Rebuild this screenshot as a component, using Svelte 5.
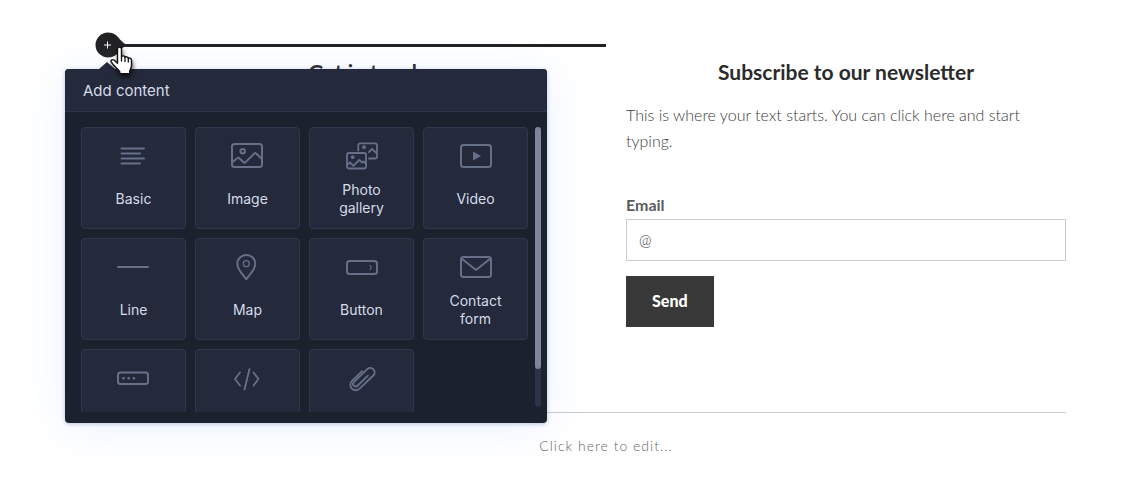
<script>
  const tiles = [
    { label: 'Basic', icon: '<path d="M5.500 7.500h22.500M5.500 12.500h18.500M5.500 17.500h22.500M5.500 22.500h18.500"/>' },
    { label: 'Image', icon: '<rect x="2" y="3" width="30" height="23" rx="2.500"/><circle cx="12.700" cy="10.200" r="2.200"/><path d="M2 21.500l5.500-4.500q.7-.5 1.400 0l5 4.500q.7.500 1.400-.1l9.200-9q.8-.8 1.600 0L32 18"/>' },
    { label: 'Photo gallery', icon: '<g stroke-width="1.800"><rect x="3" y="12" width="19" height="15.500" rx="2"/><path d="M14.300 9.500V4.300a2 2 0 0 1 2-2H31a2 2 0 0 1 2 2V15.500a2 2 0 0 1-2 2h-6M3.500 23.500L6 21.500l3.500 3.300 5.700-6 2.800 2.700 1.500-1 2.500 2.200M25 11l3-3 5 4.500"/></g><g fill="currentColor" stroke="none"><circle cx="8.700" cy="16.200" r="1.900"/><circle cx="20" cy="6.200" r="1.900"/></g>' },
    { label: 'Video', icon: '<rect x="3" y="4" width="30" height="22" rx="2.500"/><path d="M15 10.500v9l8-4.500z" fill="currentColor" stroke="none"/>' },
    { label: 'Line', icon: '<path d="M2 15h30"/>' },
    { label: 'Map', icon: '<path d="M16.300 27.300C14 23.500 7.300 18 7.300 11.700a9 8.700 0 0 1 18 0C25.300 18 18.600 23.500 16.300 27.300z"/><circle cx="16.300" cy="11.700" r="3" stroke-width="1.300"/>' },
    { label: 'Button', icon: '<rect x="3" y="9" width="30" height="13" rx="2.500"/><path d="M26 13.500l1.400 2-1.400 2" stroke-width="1.200"/>' },
    { label: 'Contact form', icon: '<rect x="3" y="5" width="30" height="20" rx="2.500"/><path d="M3.500 6.500L18 18 32.500 6.500"/>' },
    { name: 'Form field', icon: '<rect x="2" y="9.500" width="30" height="11.500" rx="2.500"/><g fill="currentColor" stroke="none"><circle cx="7.500" cy="15.300" r="1.300"/><circle cx="12.700" cy="15.300" r="1.300"/><circle cx="17.900" cy="15.300" r="1.300"/></g>' },
    { name: 'HTML', icon: '<path d="M10 9.500L5 16l5 6.500M23.500 9.500l5 6.500-5 6.500M19.500 6l-5 20.500" stroke-width="1.800"/>' },
    { name: 'File', icon: '<path transform="translate(18.300 15.500) rotate(-44)" stroke-width="1.800" d="M5-5.500H-9a5.500 5.500 0 0 0 0 11H10a4.400 4.400 0 0 0 0-8.800H-8.500a2.600 2.600 0 0 0 0 5.200H6"/>' }
  ];
</script>

<main class="page">
  <div class="columns">
    <section class="column">
      <h2>Get in touch</h2>

      <div class="insert">
        <button class="add" aria-label="Add content here">
          <svg width="34" height="26" viewBox="0 0 34 26">
            <path d="M13 0.500a12.500 12.500 0 1 0 0 25c6 0 9-3 12-7q3-3.500 7-5.500q-4-2-7-5.500c-3-4-6-7-12-7z" fill="#222" />
            <path d="M9 13h7M12.500 9.500v7" stroke="#fff" stroke-width="1" />
          </svg>
        </button>
      </div>

      <div class="panel">
        <header>Add content</header>
        <div class="content">
          <div class="tiles">
            {#each tiles as tile}
              <button class="tile" aria-label={tile.name}>
                <svg width="35" height="30" viewBox="0 0 35 30" fill="none" stroke="currentColor" stroke-width="2" stroke-linecap="round" stroke-linejoin="round">{@html tile.icon}</svg>
                {#if tile.label}<span>{tile.label}</span>{/if}
              </button>
            {/each}
          </div>
          <div class="track"><div class="thumb"></div></div>
        </div>
      </div>

      <svg class="pointer" width="26" height="32" viewBox="0 0 26 32">
        <path d="M8.500 3.200c0-2.800 4-2.800 4 0v7.300c.8-1 3-.8 3.500.8 1-.9 3-.5 3.300 1 1.200-.6 3.200 0 3.200 2v5.500c0 2-1.500 3.500-1.800 5.500v2.500H10.800v-2C9.500 23.500 4.500 19.500 2.300 16.200c-1-1.700.8-3.200 2.700-2.200l3.500 3.200z" fill="#fff" stroke="#111" stroke-width="1.400" stroke-linejoin="round" />
        <path d="M12.500 10.500v4.500M16 11.500v4M19.300 12.500v3.500" stroke="#111" stroke-width="1.300" stroke-linecap="round" />
      </svg>
    </section>

    <section class="column">
      <h2>Subscribe to our newsletter</h2>
      <p>This is where your text starts. You can click here and start typing.</p>
      <form onsubmit={(e) => e.preventDefault()}>
        <label for="email">Email</label>
        <input id="email" type="email" placeholder="@" />
        <button class="send">Send</button>
      </form>
    </section>
  </div>
  <footer>Click here to edit...</footer>
</main>

<style>
  :global(body) {
    margin: 0;
    background: #fff;
  }
  .page {
    padding: 59px 65px 20px 146px;
    font-family: Lato, sans-serif;
    color: #5c5c5c;
  }
  .columns {
    display: grid;
    grid-template-columns: 1fr 1fr;
    gap: 40px;
    padding-bottom: 85px;
    border-bottom: 1px solid #ccc;
  }
  .column {
    position: relative;
  }
  h2 {
    margin: 0;
    font-size: 21px;
    line-height: 26px;
    font-weight: 700;
    text-align: center;
    color: #2b2b2b;
  }
  p {
    margin: 17px 0 41px;
    font-size: 16px;
    line-height: 26px;
    font-weight: 300;
    color: #3c3c3c;
  }
  form {
    display: flex;
    flex-direction: column;
    align-items: flex-start;
  }
  label {
    font-size: 16px;
    line-height: 20px;
    font-weight: 700;
    margin-bottom: 4px;
  }
  input {
    box-sizing: border-box;
    width: 100%;
    height: 42px;
    padding: 0 12px;
    border: 1px solid #ccc;
    border-radius: 0;
    font: 300 15px Lato, sans-serif;
  }
  input::placeholder {
    color: #333;
  }
  .send {
    height: 51px;
    margin-top: 15px;
    padding: 0 26px 2px;
    border: 0;
    background: #383838;
    color: #fff;
    font: 900 16px/20px Lato, sans-serif;
  }
  footer {
    padding-top: 23px;
    text-align: center;
    font-size: 14px;
    line-height: 20px;
    font-weight: 300;
    letter-spacing: 1px;
    color: #666;
  }
  .insert {
    position: absolute;
    top: -27px;
    left: -51px;
    right: -20px;
    display: flex;
    align-items: center;
  }
  .insert::after {
    content: '';
    flex: 1;
    height: 3px;
    margin-left: -10px;
    background: #222;
  }
  .add {
    padding: 0;
    border: 0;
    background: none;
  }
  .add svg {
    display: block;
  }
  .panel {
    position: absolute;
    z-index: 1;
    top: 10px;
    left: -81px;
    width: 482px;
    border-radius: 4px;
    background: #1b222d;
    font-family: Inter, sans-serif;
    color: #d5dbea;
    box-shadow: 0 4px 44px rgba(90, 150, 255, 0.12), 0 1px 4px rgba(40, 70, 130, 0.3);
  }
  .panel::before {
    content: '';
    position: absolute;
    top: -7px;
    left: 34px;
    border: 8px solid transparent;
    border-top: 0;
    border-bottom: 7px solid #242a3b;
  }
  header {
    padding: 2px 18px 0;
    border-bottom: 1px solid #2c3549;
    border-radius: 4px 4px 0 0;
    background: #242a3b;
    font-size: 15px;
    line-height: 40px;
  }
  .content {
    display: flex;
    gap: 7px;
    padding: 15px 6px 11px 16px;
  }
  .tiles {
    flex: 1;
    display: grid;
    grid-template-columns: repeat(4, 1fr);
    grid-auto-rows: 102px;
    gap: 9px;
    height: 285px;
    overflow: hidden;
  }
  .tile {
    display: flex;
    flex-direction: column;
    align-items: center;
    padding: 13px 8px 0;
    border: 1px solid #2f374c;
    border-radius: 4px;
    background: #242a3b;
    font: 14px/18px Inter, sans-serif;
    color: #d5dbea;
  }
  .tile svg {
    flex: none;
    color: #667089;
  }
  .tile span {
    display: flex;
    align-items: center;
    height: 36px;
    margin-top: 10px;
    max-width: 64px;
  }
  .track {
    width: 6px;
    height: 280px;
    border-radius: 3px;
    background: #2a3347;
  }
  .thumb {
    height: 242px;
    border-radius: 3px;
    background: #7c879b;
  }
  .pointer {
    position: absolute;
    z-index: 2;
    top: -13px;
    left: -37px;
    filter: drop-shadow(1px 3px 2px rgba(0, 0, 0, 0.6));
  }
</style>
